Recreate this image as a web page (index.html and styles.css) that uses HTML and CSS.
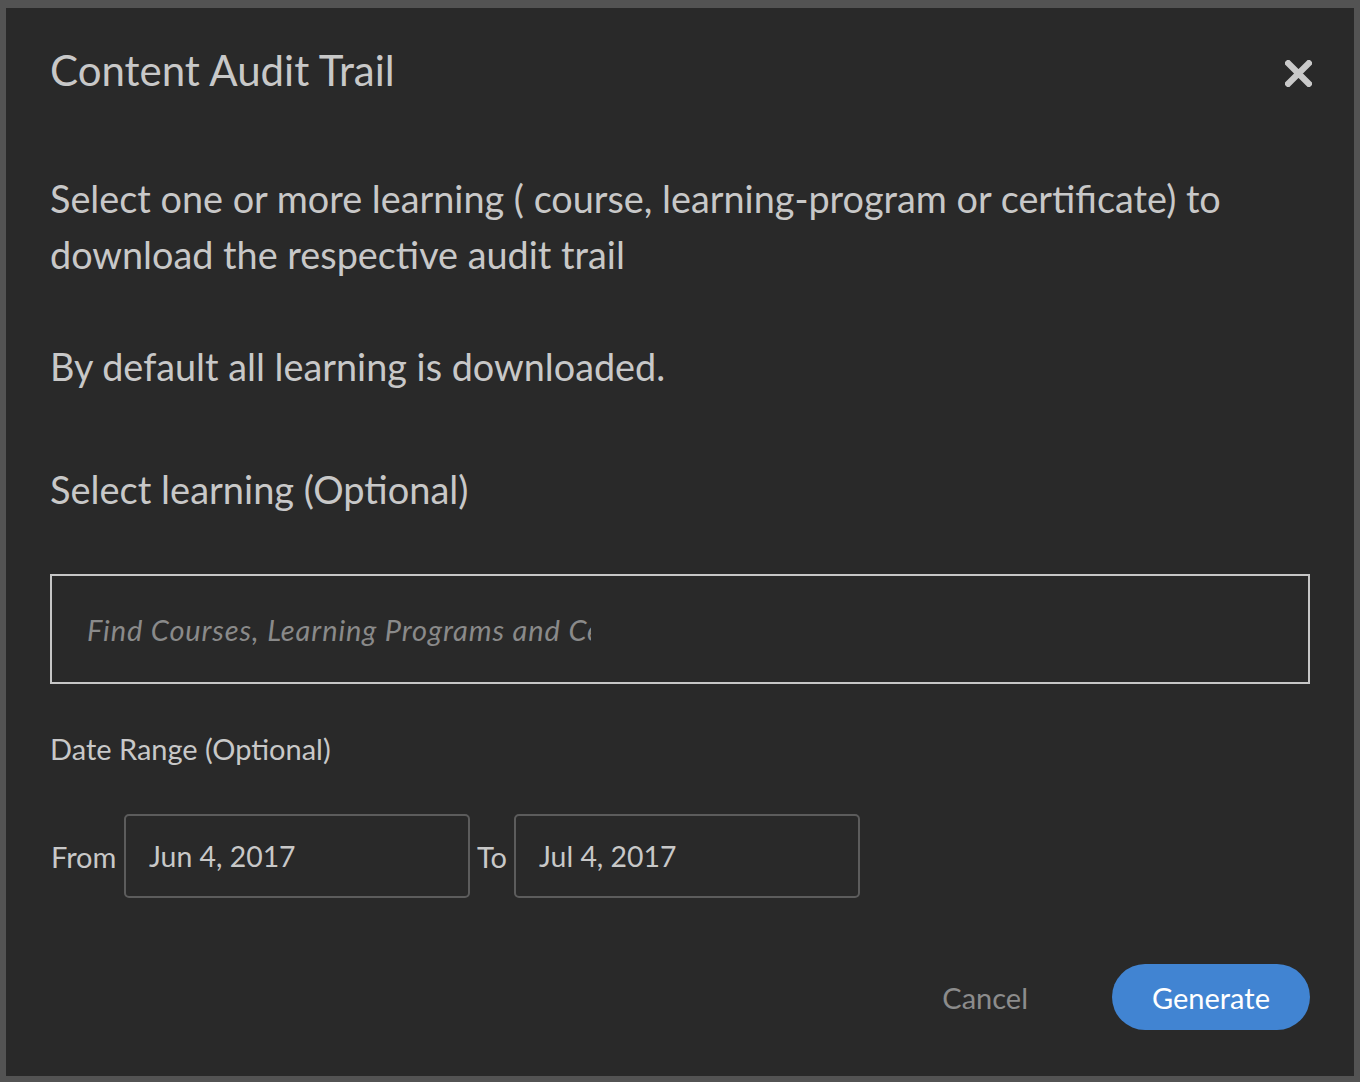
FILE: index.html
```html
<!DOCTYPE html>
<html lang="en">
<head>
<meta charset="utf-8">
<title>Content Audit Trail</title>
<link rel="stylesheet" href="styles.css">
</head>
<body>
<div class="dialog" role="dialog" aria-labelledby="dlg-title">
  <header class="dialog-header">
    <h1 class="dialog-title" id="dlg-title">Content Audit Trail</h1>
    <button class="close-btn" type="button" aria-label="Close">
      <svg width="27" height="27" viewBox="0 0 27 27" aria-hidden="true">
        <path d="M3.2 3.2 L23.8 23.8 M23.8 3.2 L3.2 23.8" stroke="#c9c9c9" stroke-width="6.2" stroke-linecap="square" fill="none"/>
      </svg>
    </button>
  </header>

  <p class="intro">Select one or more learning ( course, learning-program or certificate) to download the respective audit trail</p>
  <p class="intro note">By default all learning is downloaded.</p>

  <h2 class="section-label">Select learning (Optional)</h2>
  <div class="search-box">
    <span class="search-placeholder">Find Courses, Learning Programs and Certificates</span>
  </div>

  <div class="field-label">Date Range (Optional)</div>
  <div class="date-row">
    <span class="date-label">From</span>
    <div class="date-input">Jun 4, 2017</div>
    <span class="date-label date-label-to">To</span>
    <div class="date-input">Jul 4, 2017</div>
  </div>

  <footer class="dialog-footer">
    <button class="btn-cancel" type="button">Cancel</button>
    <button class="btn-generate" type="button">Generate</button>
  </footer>
</div>
</body>
</html>
```
FILE: styles.css
```css
* { box-sizing: border-box; }

html, body {
  margin: 0;
  background: #535353;
}

body {
  padding: 8px 6px 6px 6px;
  font-family: Lato, "Open Sans", sans-serif;
  color: #c8c8c8;
}

.dialog {
  height: 1068px;
  background: #292929;
  padding: 37px 44px 46px 44px;
}

.dialog-header {
  display: flex;
  justify-content: space-between;
  align-items: flex-start;
}

.dialog-title {
  margin: 0;
  font-size: 42px;
  line-height: 50px;
  font-weight: 400;
  color: #c8c8c8;
}

.close-btn {
  margin: 15px -2px 0 0;
  padding: 0;
  border: 0;
  background: none;
  width: 27px;
  height: 27px;
  display: block;
}

.close-btn svg { display: block; }

.intro {
  margin: 76px 0 0 0;
  font-size: 37.8px;
  line-height: 56px;
  color: #c8c8c8;
}

.intro.note { margin-top: 56px; }

.section-label {
  margin: 66px 0 0 0;
  font-size: 38px;
  line-height: 56px;
  font-weight: 400;
  color: #c8c8c8;
}

.search-box {
  margin-top: 57px;
  height: 110px;
  border: 2px solid #c6c6c6;
  padding-left: 35px;
  display: flex;
  align-items: center;
}

.search-placeholder {
  display: block;
  width: 504px;
  overflow: hidden;
  white-space: nowrap;
  font-style: italic;
  font-size: 29px;
  letter-spacing: 0.9px;
  color: #8a8a8a;
}

.field-label {
  margin-top: 47px;
  font-size: 29px;
  line-height: 36px;
  color: #c8c8c8;
}

.date-row {
  margin-top: 47px;
  display: grid;
  grid-template-columns: 74px 346px 44px 346px;
  align-items: center;
  height: 84px;
}

.date-label {
  font-size: 29px;
  color: #c8c8c8;
  padding-left: 1px;
}

.date-label-to { padding-left: 7px; }

.date-input {
  height: 84px;
  border: 2px solid #5c5c5c;
  border-radius: 5px;
  padding-left: 23px;
  display: flex;
  align-items: center;
  font-size: 28.4px;
  color: #c8c8c8;
}

.dialog-footer {
  margin-top: 66px;
  display: flex;
  justify-content: flex-end;
  align-items: center;
}

.btn-cancel {
  margin-right: 84px;
  padding: 0;
  border: 0;
  background: none;
  font-family: inherit;
  font-size: 29px;
  color: #8c8c8c;
}

.btn-generate {
  width: 198px;
  height: 66px;
  border: 0;
  border-radius: 33px;
  background: #4184d2;
  font-family: inherit;
  font-size: 29px;
  color: #ffffff;
}
```
